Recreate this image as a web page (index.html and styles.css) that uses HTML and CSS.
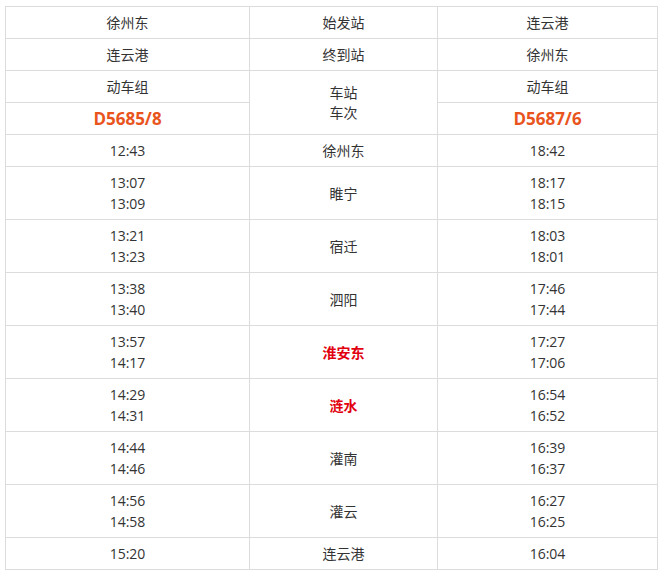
FILE: index.html
```html
<!DOCTYPE html>
<html lang="zh-CN">
<head>
<meta charset="utf-8">
<title>D5685/8 D5687/6 时刻表</title>
<link rel="stylesheet" href="styles.css">
</head>
<body>
<div class="wrap">
<table class="tt">
<colgroup><col class="c1"><col class="c2"><col class="c3"></colgroup>
<tbody>
<tr><td>徐州东</td><td>始发站</td><td>连云港</td></tr>
<tr><td>连云港</td><td>终到站</td><td>徐州东</td></tr>
<tr><td>动车组</td><td rowspan="2" class="stack">车站<br>车次</td><td>动车组</td></tr>
<tr><td class="train">D5685/8</td><td class="train">D5687/6</td></tr>
<tr><td>12:43</td><td>徐州东</td><td>18:42</td></tr>
<tr><td>13:07<br>13:09</td><td>睢宁</td><td>18:17<br>18:15</td></tr>
<tr><td>13:21<br>13:23</td><td>宿迁</td><td>18:03<br>18:01</td></tr>
<tr><td>13:38<br>13:40</td><td>泗阳</td><td>17:46<br>17:44</td></tr>
<tr><td>13:57<br>14:17</td><td class="hl">淮安东</td><td>17:27<br>17:06</td></tr>
<tr><td>14:29<br>14:31</td><td class="hl">涟水</td><td>16:54<br>16:52</td></tr>
<tr><td>14:44<br>14:46</td><td>灌南</td><td>16:39<br>16:37</td></tr>
<tr><td>14:56<br>14:58</td><td>灌云</td><td>16:27<br>16:25</td></tr>
<tr><td>15:20</td><td>连云港</td><td>16:04</td></tr>
</tbody>
</table>
</div>
</body>
</html>
```
FILE: styles.css
```css
html, body {
  margin: 0;
  padding: 0;
  background: #fff;
}
.wrap {
  padding: 6px 0 0 5px;
}
.tt {
  border-collapse: collapse;
  table-layout: fixed;
  width: 653px;
  font-family: "Open Sans", "Noto Sans CJK SC", sans-serif;
  font-size: 14px;
  color: #333;
}
.c1 { width: 244px; }
.c2 { width: 188px; }
.c3 { width: 220px; }
.tt td {
  border: 1px solid #dcdcdc;
  padding: 5px 8px;
  line-height: 21px;
  text-align: center;
  vertical-align: middle;
}
.tt td.stack {
  line-height: 20px;
}
.tt td.train {
  color: #e9541d;
  font-weight: bold;
  font-size: 17px;
}
.tt td.hl {
  color: #e2000f;
  font-weight: bold;
}
```
